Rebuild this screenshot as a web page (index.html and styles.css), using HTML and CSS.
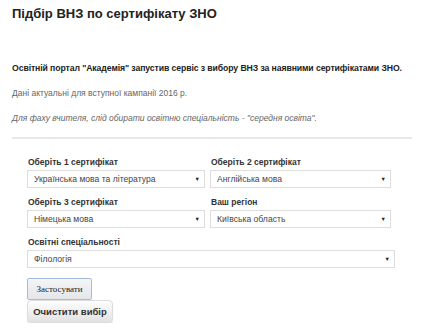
FILE: index.html
```html
<!DOCTYPE html>
<html lang="uk">
<head>
<meta charset="utf-8">
<link rel="stylesheet" href="styles.css">
</head>
<body>
<div class="page">
  <h1 class="title">Підбір ВНЗ по сертифікату ЗНО</h1>
  <p class="lead">Освітній портал "Академія" запустив сервіс з вибору ВНЗ за наявними сертифікатами ЗНО.</p>
  <p class="note">Дані актуальні для вступної кампанії 2016 р.</p>
  <p class="note italic">Для фаху вчителя, слід обирати освітню спеціальність - "середня освіта".</p>
  <div class="rule"></div>
  <form class="form">
    <div class="grid">
      <div class="field">
        <div class="label">Оберіть 1 сертифікат</div>
        <div class="select"><span>Українська мова та література</span><span class="arrow">▼</span></div>
      </div>
      <div class="field">
        <div class="label">Оберіть 2 сертифікат</div>
        <div class="select"><span>Англійська мова</span><span class="arrow">▼</span></div>
      </div>
      <div class="field">
        <div class="label">Оберіть 3 сертифікат</div>
        <div class="select"><span>Німецька мова</span><span class="arrow">▼</span></div>
      </div>
      <div class="field">
        <div class="label">Ваш регіон</div>
        <div class="select"><span>Київська область</span><span class="arrow">▼</span></div>
      </div>
    </div>
    <div class="field wide">
      <div class="label">Освітні спеціальності</div>
      <div class="select"><span>Філологія</span><span class="arrow">▼</span></div>
    </div>
    <div class="buttons">
      <button type="button" class="btn apply">Застосувати</button>
      <button type="button" class="btn clear">Очистити вибір</button>
    </div>
  </form>
</div>
</body>
</html>
```
FILE: styles.css
```css
html, body {
  margin: 0;
  padding: 0;
  background: #fff;
}
.page {
  padding: 5px 12px 0 12px;
  font-family: "Liberation Sans", Arial, sans-serif;
}
.title {
  margin: 0;
  font-size: 13px;
  line-height: 18px;
  font-weight: bold;
  color: #222;
}
.lead {
  margin: 39px 0 0 0;
  font-size: 8.7px;
  letter-spacing: -0.1px;
  line-height: 12px;
  font-weight: bold;
  color: #222;
  white-space: nowrap;
}
.note {
  margin: 13px 0 0 0;
  font-size: 8.5px;
  line-height: 12px;
  color: #666;
}
.italic {
  font-style: italic;
}
.rule {
  margin-top: 13px;
  width: 400px;
  height: 2px;
  background: #e8e8e8;
}
.form {
  padding: 17px 0 0 15px;
  width: 368px;
}
.grid {
  display: grid;
  grid-template-columns: 178px 181px;
  column-gap: 5px;
  row-gap: 8px;
}
.field {
  display: flex;
  flex-direction: column;
  gap: 2px;
}
.wide {
  margin-top: 8px;
}
.label {
  font-size: 8.5px;
  line-height: 12px;
  font-weight: bold;
  color: #333;
  padding-left: 1px;
}
.select {
  display: flex;
  justify-content: space-between;
  align-items: center;
  height: 16px;
  border: 1px solid #ddd;
  padding: 0 4px 0 6px;
  font-size: 8.6px;
  color: #444;
  background: #fff;
}
.arrow {
  font-size: 5.5px;
  color: #222;
}
.buttons {
  display: flex;
  flex-direction: column;
  align-items: flex-start;
  margin-top: 10px;
}
.btn {
  margin: 0;
  cursor: pointer;
}
.apply {
  width: 65px;
  height: 22px;
  padding: 0;
  font-family: "Liberation Serif", serif;
  font-size: 9px;
  color: #222;
  border: 1px solid #a3bcdc;
  border-radius: 2px;
  background: linear-gradient(#f4f5f7, #e4e6ea);
}
.clear {
  width: 86px;
  height: 23px;
  padding: 0;
  font-family: "Liberation Sans", Arial, sans-serif;
  font-weight: bold;
  font-size: 9.5px;
  color: #333;
  border: 1px solid #ddd;
  border-radius: 4px;
  background: linear-gradient(#fdfdfd, #e2e2e2);
  box-shadow: 0 1px 1px rgba(0,0,0,0.15);
}
```
